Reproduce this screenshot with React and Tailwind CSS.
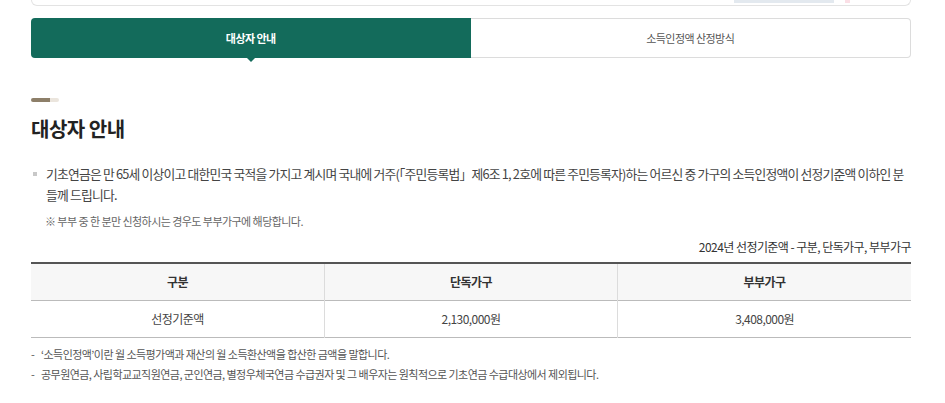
import React from 'react';

const rows = [{ label: '선정기준액', single: '2,130,000원', couple: '3,408,000원' }];

export default function App() {
  return (
    <div className="w-[945px] h-[403px] overflow-hidden bg-white font-['Noto_Sans_CJK_KR','Noto_Sans',sans-serif] tracking-[-0.55px]">
      <div className="mx-[31px] w-[880px]">
        {/* top card edge */}
        <div className="h-[6px] border-x border-b border-[#e3e3e3] rounded-b-[8px] flex justify-end pr-[76px]">
          <div className="w-[100px] h-[3px] bg-[#e3e9ef]" />
          <div className="w-[5px] h-[3px] bg-[#fbdfe6] ml-[11px] -mr-[16px]" />
        </div>

        {/* tabs */}
        <div className="mt-[12px] flex h-[40px]">
          <div className="relative flex-1 bg-[#136b5b] rounded-l-[4px] flex items-center justify-center text-white text-[11px] font-bold">
            대상자 안내
            <span className="absolute left-1/2 -bottom-[4px] -translate-x-1/2 w-0 h-0 border-x-[4px] border-x-transparent border-t-[4px] border-t-[#136b5b]" />
          </div>
          <div className="flex-1 border border-l-0 border-[#dcdcdc] rounded-r-[4px] flex items-center justify-center text-[11px] text-[#555]">
            소득인정액 산정방식
          </div>
        </div>

        {/* section title */}
        <div className="mt-[40px] flex h-[4px]">
          <div className="w-[19px] h-[4px] rounded-l-full bg-[#8d7f69]" />
          <div className="w-[9px] h-[4px] rounded-r-full bg-[#ebe5dd]" />
        </div>
        <h2 className="mt-[13px] text-[20px] leading-[28px] font-bold text-[#222] tracking-[-0.5px]">대상자 안내</h2>

        <div className="mt-[20px] flex text-[12.8px] leading-[21px] text-[#444] tracking-[-0.8px]">
          <span className="w-[15px] shrink-0 pt-[9px] pl-[2px]">
            <span className="block w-[4px] h-[4px] bg-[#c8c8c8]" />
          </span>
          <p>
            기초연금은 만 65세 이상이고 대한민국 국적을 가지고 계시며 국내에 거주(「주민등록법」제6조 1, 2호에 따른 주민등록자)하는 어르신 중 가구의 소득인정액이 선정기준액 이하인 분들께 드립니다.
          </p>
        </div>
        <p className="mt-[8px] pl-[14px] text-[11px] leading-[16px] text-[#666]">※ 부부 중 한 분만 신청하시는 경우도 부부가구에 해당합니다.</p>

        <p className="mt-[9px] text-right text-[12px] leading-[18px] text-[#333]">2024년 선정기준액 - 구분, 단독가구, 부부가구</p>

        <table className="mt-[6px] w-full border-t-2 border-[#555] border-b border-b-[#bbb] text-[12px] text-[#333] table-fixed">
          <thead>
            <tr className="bg-[#f7f7f7] h-[37px] border-b border-[#bbb]">
              <th className="font-bold">구분</th>
              <th className="font-bold border-l border-[#dcdcdc]">단독가구</th>
              <th className="font-bold border-l border-[#dcdcdc]">부부가구</th>
            </tr>
          </thead>
          <tbody>
            {rows.map(r => (
              <tr key={r.label} className="h-[37px] text-[#444]">
                <td className="text-center">{r.label}</td>
                <td className="text-center border-l border-[#dcdcdc]">{r.single}</td>
                <td className="text-center border-l border-[#dcdcdc]">{r.couple}</td>
              </tr>
            ))}
          </tbody>
        </table>

        <ul className="mt-[6px] text-[11px] leading-[20px] text-[#555]">
          <li className="flex"><span className="w-[10px] shrink-0">-</span>‘소득인정액’이란 월 소득평가액과 재산의 월 소득환산액을 합산한 금액을 말합니다.</li>
          <li className="flex"><span className="w-[10px] shrink-0">-</span>공무원연금, 사립학교교직원연금, 군인연금, 별정우체국연금 수급권자 및 그 배우자는 원칙적으로 기초연금 수급대상에서 제외됩니다.</li>
        </ul>
      </div>
    </div>
  );
}
